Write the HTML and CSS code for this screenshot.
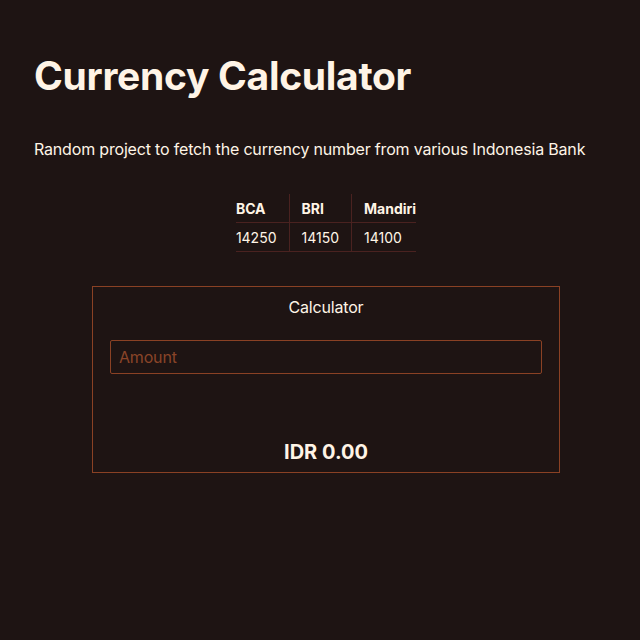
FILE: index.html
```html
<!DOCTYPE html>
<html>
<head>
<meta charset="utf-8">
<link rel="stylesheet" href="styles.css">
</head>
<body>
<main class="page">
  <h1 class="title">Currency Calculator</h1>
  <p class="desc">Random project to fetch the currency number from various Indonesia Bank</p>
  <table class="rates">
    <thead>
      <tr><th>BCA</th><th>BRI</th><th>Mandiri</th></tr>
    </thead>
    <tbody>
      <tr><td>14250</td><td>14150</td><td>14100</td></tr>
    </tbody>
  </table>
  <section class="calc">
    <h2 class="calc-title">Calculator</h2>
    <input class="amount" type="text" placeholder="Amount">
    <div class="result">IDR 0.00</div>
  </section>
</main>
</body>
</html>
```
FILE: styles.css
```css
html, body {
  margin: 0;
  padding: 0;
  background: #1e1413;
  color: #fff4e6;
  font-family: Inter, "Noto Sans", sans-serif;
}
.page {
  padding: 52px 22px 0 34px;
  display: flex;
  flex-direction: column;
}
.title {
  margin: 0;
  font-size: 39px;
  font-weight: 700;
  line-height: 48px;
  letter-spacing: -0.3px;
}
.desc {
  margin: 37px 0 0 0;
  font-size: 16px;
  line-height: 24px;
  letter-spacing: -0.18px;
}
.rates {
  margin: 33px auto 0 auto;
  border-collapse: collapse;
  font-size: 14px;
}
.rates th, .rates td {
  text-align: left;
  padding: 0 12px;
  height: 28px;
  border-bottom: 1px solid #4a2220;
}
.rates th:first-child, .rates td:first-child {
  padding-left: 0;
}
.rates th:last-child, .rates td:last-child {
  padding-right: 0;
}
.rates th + th, .rates td + td {
  border-left: 1px solid #4a2220;
}
.rates th {
  font-weight: 700;
}
.calc {
  align-self: center;
  width: 432px;
  margin-top: 34px;
  border: 1px solid #8a4124;
  padding: 8px 17px 5px 17px;
  display: flex;
  flex-direction: column;
}
.calc-title {
  margin: 0;
  text-align: center;
  font-size: 16px;
  font-weight: 400;
  line-height: 24px;
  letter-spacing: -0.18px;
}
.amount {
  margin-top: 21px;
  height: 34px;
  box-sizing: border-box;
  background: transparent;
  border: 1px solid #8a4124;
  border-radius: 2px;
  padding: 0 8px;
  font-family: Inter, "Noto Sans", sans-serif;
  font-size: 16px;
  letter-spacing: -0.18px;
  color: #fff4e6;
  outline: none;
}
.amount::placeholder {
  color: #8a4428;
}
.result {
  margin-top: 63px;
  text-align: center;
  font-size: 20px;
  font-weight: 700;
  line-height: 30px;
}
```
